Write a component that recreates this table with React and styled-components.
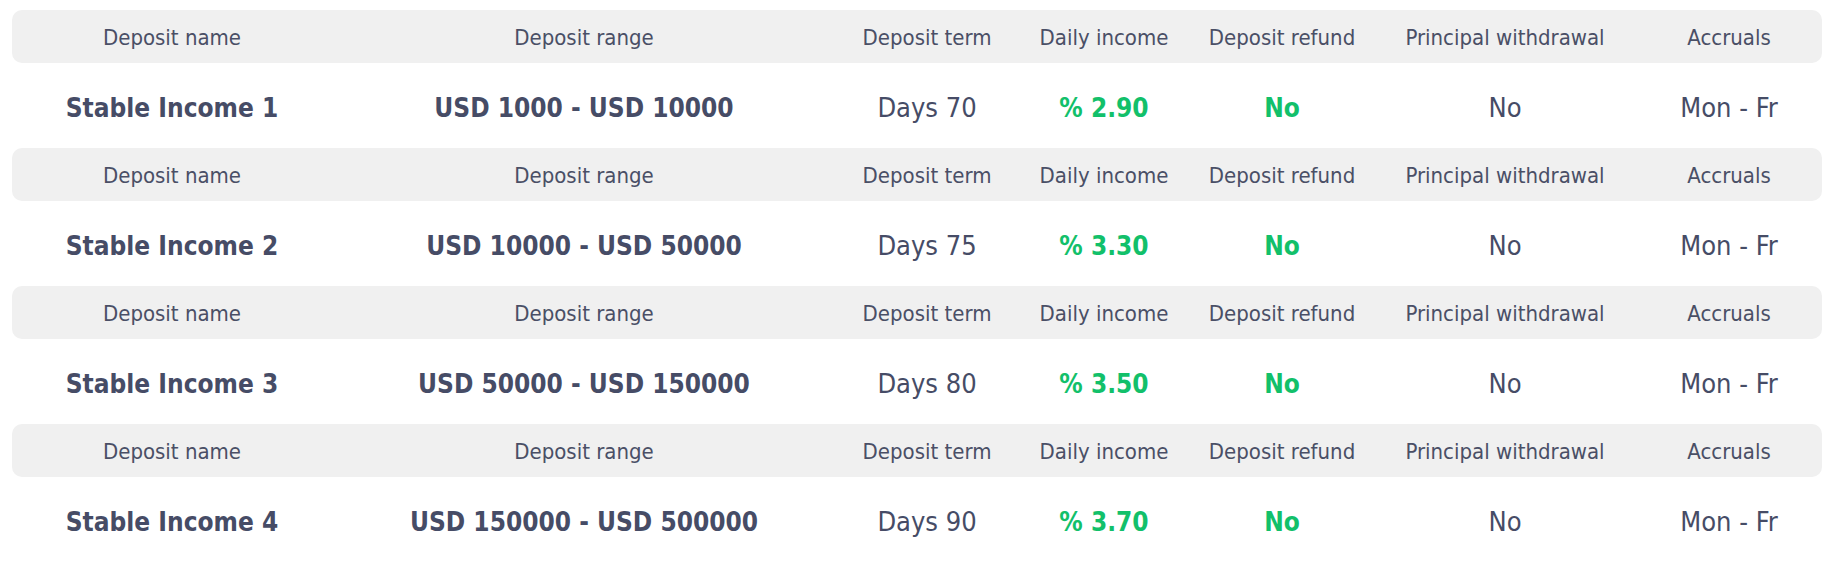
import React from 'react';
import styled, { createGlobalStyle } from 'styled-components';

const GlobalStyle = createGlobalStyle`
    body {
        margin: 0;
        background: #fff;
        font-family: "DejaVu Sans Condensed", "DejaVu Sans", sans-serif;
    }
`;

const COLUMNS = '320px 504px 182px 172px 184px 262px 186px';

const Page = styled.div`
    padding: 10px 17px 0 12px;
`;

const Block = styled.section`
    display: flex;
    flex-direction: column;
`;

const HeaderRow = styled.div`
    display: grid;
    grid-template-columns: ${COLUMNS};
    align-items: center;
    height: 53px;
    padding-top: 2px;
    box-sizing: border-box;
    background-color: #f0f0f0;
    border-radius: 10px;
`;

const HeaderCell = styled.div`
    text-align: center;
    font-size: 22px;
    color: #4a4f66;
    white-space: nowrap;
`;

const DataRow = styled.div`
    display: grid;
    grid-template-columns: ${COLUMNS};
    align-items: center;
    height: 85px;
    padding-top: 4px;
    box-sizing: border-box;
`;

const DataCell = styled.div`
    text-align: center;
    white-space: nowrap;
    font-size: ${props => (props.$bold ? '26px' : '27px')};
    font-weight: ${props => (props.$bold ? 'bold' : 'normal')};
    color: ${props => (props.$green ? '#12c06a' : '#464c66')};
`;

const HEADERS = [
    'Deposit name',
    'Deposit range',
    'Deposit term',
    'Daily income',
    'Deposit refund',
    'Principal withdrawal',
    'Accruals',
];

const deposits = [
    { name: 'Stable Income 1', range: 'USD 1000 - USD 10000', days: 70, income: '2.90' },
    { name: 'Stable Income 2', range: 'USD 10000 - USD 50000', days: 75, income: '3.30' },
    { name: 'Stable Income 3', range: 'USD 50000 - USD 150000', days: 80, income: '3.50' },
    { name: 'Stable Income 4', range: 'USD 150000 - USD 500000', days: 90, income: '3.70' },
];

const App = () => {
    return (
        <>
            <GlobalStyle />
            <Page>
                {deposits.map(deposit => (
                    <Block key={deposit.name}>
                        <HeaderRow>
                            {HEADERS.map(title => (
                                <HeaderCell key={title}>{title}</HeaderCell>
                            ))}
                        </HeaderRow>
                        <DataRow>
                            <DataCell $bold>{deposit.name}</DataCell>
                            <DataCell $bold>{deposit.range}</DataCell>
                            <DataCell>Days {deposit.days}</DataCell>
                            <DataCell $bold $green>% {deposit.income}</DataCell>
                            <DataCell $bold $green>No</DataCell>
                            <DataCell>No</DataCell>
                            <DataCell>Mon - Fr</DataCell>
                        </DataRow>
                    </Block>
                ))}
            </Page>
        </>
    );
};

export default App;
